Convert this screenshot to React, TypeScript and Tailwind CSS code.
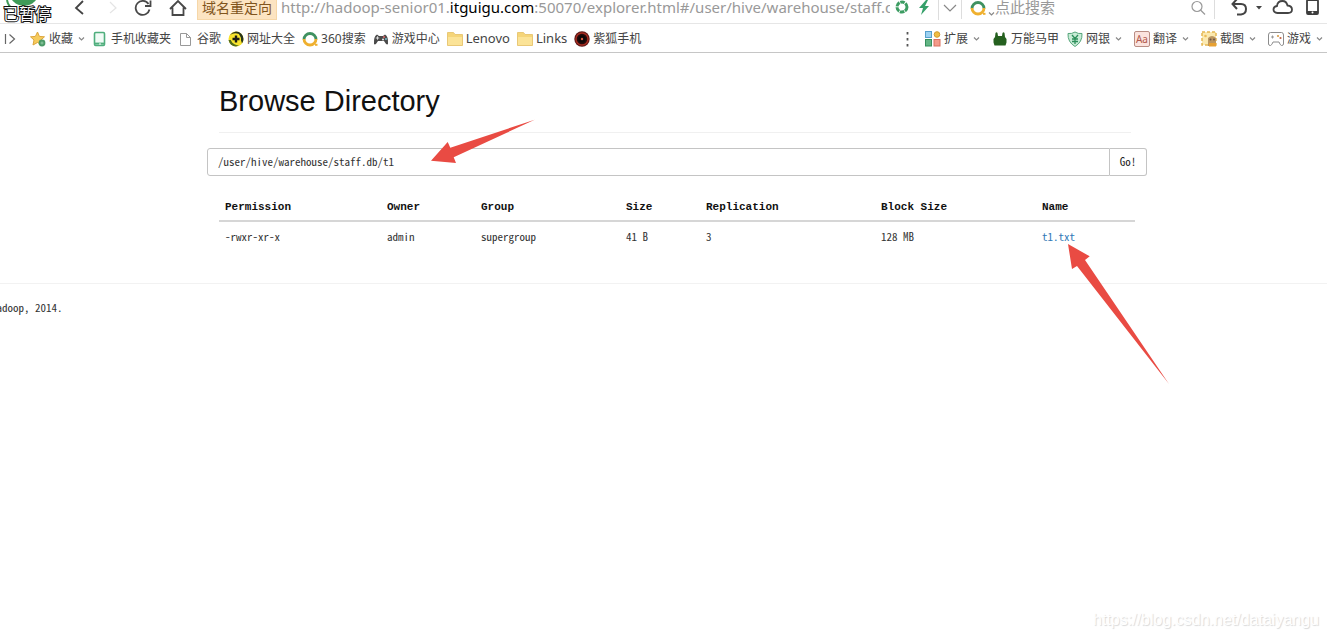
import type { ReactNode } from "react";

const mono = "font-['Noto_Sans_Mono_CJK_SC','Liberation_Mono',monospace]";

function Svg({ w = 16, h = 16, vb, children }: { w?: number; h?: number; vb?: string; children: ReactNode }) {
  return (
    <svg width={w} height={h} viewBox={vb ?? `0 0 ${w} ${h}`} fill="none" className="shrink-0" aria-hidden="true">
      {children}
    </svg>
  );
}

const Chevron = () => (
  <Svg w={7} h={6}><path d="M1 1.5 3.5 4 6 1.5" stroke="#888" strokeWidth="1.2" /></Svg>
);
const Star = () => (
  <Svg>
    <path d="M7.5 1 9.4 5.4 14.5 5.8 10.8 9 12 14 7.5 11.5 3 14 4 9 .5 5.8 5.4 5.4Z" fill="#f6cb5c" stroke="#dda63c" />
    <circle cx="12" cy="12" r="3.4" fill="#4c9a68" /><path d="M10.5 12h3M12 10.5v3" stroke="#8fc9a2" />
  </Svg>
);
const MobileMark = () => (
  <Svg><rect x="2.5" y="1.5" width="10" height="13" rx="1.2" stroke="#4fae7d" strokeWidth="1.6" fill="#f1fbf6" /><path d="M3 12.6h9" stroke="#4fae7d" strokeWidth="2" /><path d="M7 13h2" stroke="#fff" /></Svg>
);
const FileMark = () => (
  <Svg><path d="M2.5 2.5h6l4 4v8h-10Z" stroke="#999" /><path d="M8.5 2.5v4h4" stroke="#999" /></Svg>
);
const Hao = () => (
  <Svg><circle cx="8" cy="8" r="7.5" fill="#f7e12c" /><path d="M8 .5A7.5 7.5 0 0 1 15.5 8 7.5 7.5 0 0 1 14 12.500L11 3Q6 1 2 4 4 1 8 .5Z" fill="#26331c" /><path d="M.5 9Q2 15 8 15.500L11 14.500Q5 14 3 9Z" fill="#4f6a1c" /><circle cx="8" cy="8" r="5" fill="#fae72f" /><path d="M8 4.500v7M4.500 8h7" stroke="#1b1b14" strokeWidth="2.4" /></Svg>
);
const Ring = () => (
  <Svg><path d="M2 8.500A6 6 0 1 1 14 8.500" stroke="#3f9160" strokeWidth="2.800" /><path d="M2 8A6 6 0 0 0 14 8" stroke="#efb02f" strokeWidth="2.800" /><path d="M13 13.800h2.500" stroke="#efb02f" strokeWidth="2" /></Svg>
);
const Gamepad = () => (
  <Svg><path d="M1 13Q.5 5 4 3.500L6 5h4l2-1.500Q15.500 5 15 13 13.500 14.500 11 10H5Q2.500 14.500 1 13Z" fill="#4a4a4a" /><path d="M2.800 7h3.400M4.500 5.300v3.400" stroke="#ddd" /><circle cx="11" cy="6" r="1" fill="#d66" /><circle cx="13" cy="8" r="1" fill="#7bc" /><circle cx="10" cy="8.500" r="1" fill="#eee" /></Svg>
);
const Folder = () => (
  <Svg><path d="M.5 1.500h6l1.500 2h7.500v11H.5Z" fill="#f5d579" stroke="#e9c876" /><path d="M1 6h14v8H1Z" fill="#fbe397" /></Svg>
);
const Fox = () => (
  <Svg><circle cx="8" cy="8" r="7.700" fill="#5a1715" /><circle cx="8" cy="8" r="6" stroke="#a52c20" strokeWidth="1.500" fill="#230b0b" /><circle cx="8" cy="8" r="3.500" fill="#0d0707" /><circle cx="8" cy="8" r="1.200" fill="#d95b43" /></Svg>
);
const Grid = () => (
  <Svg><rect x=".5" y=".5" width="6" height="6" fill="#9cd1f1" stroke="#569fcd" /><circle cx="12" cy="3.500" r="2.800" fill="#f0bd43" stroke="#cf9a2f" /><rect x=".5" y="8.500" width="6" height="6.500" fill="#62b584" stroke="#358e5c" /><rect x="9" y="8.500" width="6" height="6.500" fill="#f39b8b" stroke="#d9705f" /></Svg>
);
const Vest = () => (
  <Svg><path d="M3.500 2Q4.500 .5 5.500 2L6 5h4l.5-3Q11.500 .5 12.500 2L13 6l1.500 2v3.500L13.500 14.500h-11L1.500 11.500V8L3 6Z" fill="#25601f" /></Svg>
);
const Shield = () => (
  <Svg><path d="M8 1Q11 3 15 2.500 15.500 11 8 15.500 .5 11 1 2.500 5 3 8 1Z" fill="#c9ecd7" stroke="#56a67b" /><path d="M5 4 8 7.500 11 4M8 7.500V13M5 8h6M5 10.500h6" stroke="#2d8f5b" strokeWidth="1.300" /></Svg>
);
const Translate = () => (
  <span aria-hidden="true" className="flex size-4 shrink-0 items-center justify-center rounded-xs border border-[#b98d84] bg-[#fbe3de] text-[10px] leading-none text-[#b1584b]">Aa</span>
);
const Capture = () => (
  <Svg><rect x="1" y="1" width="14" height="13" fill="#fbe9b0" stroke="#e5b751" strokeWidth="1.500" strokeDasharray="3 2" /><path d="M7 7Q11 3 15 7v8H7Z" fill="#bb9660" /><path d="M8 12h7v3.500H8Z" fill="#e8a132" /><circle cx="9.500" cy="8.500" r="1" fill="#6b5548" /><circle cx="13" cy="8.500" r="1" fill="#6b5548" /><circle cx="4.500" cy="5" r="1.300" fill="#edbc57" /></Svg>
);
const PadOutline = () => (
  <Svg><path d="M2.500 1.500h11Q15.500 1.500 15.500 4v9Q15.500 14.500 13.500 14.500 12 14 11 11H5Q4 14 2.500 14.500 .5 14.500 .5 13V4Q.5 1.500 2.500 1.500Z" stroke="#8c8c8c" /><path d="M3 6h3M4.500 4.500v3" stroke="#999" /><circle cx="10" cy="5" r="1.100" fill="#d99c45" /><circle cx="12.500" cy="7" r="1.100" fill="#c46444" /></Svg>
);

function Mark({ icon, label, menu }: { icon: ReactNode; label: string; menu?: boolean }) {
  return (
    <button type="button" className="flex shrink-0 items-center gap-[3px] whitespace-nowrap">
      {icon}
      <span>{label}</span>
      {menu && <span className="ml-0.5 flex"><Chevron /></span>}
    </button>
  );
}

function Toolbar() {
  return (
    <div className="flex h-6 items-center overflow-hidden border-b border-[#e6e6e6] pb-2 pl-[73px] pr-2">
      <div className="flex shrink-0 items-center">
        <button type="button" aria-label="Back"><Svg w={12} h={16}><path d="M10 1 3 8l7 6" stroke="#444" strokeWidth="1.800" /></Svg></button>
        <button type="button" aria-label="Forward" className="ml-6"><Svg w={8} h={16}><path d="M1 2l6 6-6 5" stroke="#e4e4e4" strokeWidth="1.200" /></Svg></button>
        <button type="button" aria-label="Reload" className="ml-4"><Svg w={20} h={18}><path d="M16.500 10.500A7 7 0 1 1 15.500 5" stroke="#484848" strokeWidth="1.800" /><path d="M17.500 1.500V7H12" stroke="#484848" strokeWidth="1.800" /></Svg></button>
        <button type="button" aria-label="Home" className="ml-4"><Svg w={18} h={18}><path d="M1 10 9 2l8 8M3.500 8.500V16h11V8.500" stroke="#484848" strokeWidth="1.800" /></Svg></button>
      </div>
      <div className="ml-2.5 flex min-w-0 flex-1 items-center">
        <span className="flex h-6 shrink-0 items-center border border-[#f6d7a8] bg-[#fce4c2] px-1 text-sm text-[#80541c]">域名重定向</span>
        <span className="ml-1 min-w-0 flex-1 overflow-hidden whitespace-nowrap text-[15px] text-[#999]">http://hadoop-senior01.<span className="text-black">itguigu.com</span>:50070/explorer.html#/user/hive/warehouse/staff.db</span>
        <div className="ml-1 flex shrink-0 items-center">
          <Svg><circle cx="8" cy="7" r="5" stroke="#3c9c62" strokeWidth="3" strokeDasharray="4.500 .8" /></Svg>
          <span className="ml-2 flex"><Svg w={12} h={16}><path d="M8 0 1 8h4L3 15l8-9H7l3-6Z" fill="#36a06a" /></Svg></span>
          <span className="ml-2 h-6 w-px bg-[#ddd]" />
          <button type="button" aria-label="Address history" className="mx-1"><Svg w={14} h={10}><path d="m1 2 6 6 6-6" stroke="#888" strokeWidth="1.200" /></Svg></button>
        </div>
      </div>
      <form className="flex w-[254px] shrink-0 items-center border-x border-[#ddd] pl-2 pr-2" onSubmit={(e) => e.preventDefault()}>
        <Ring />
        <span className="ml-0.5 mt-3 flex"><Chevron /></span>
        <input aria-label="搜索" placeholder="点此搜索" className="w-0 min-w-0 flex-1 text-[15px] outline-none placeholder:text-[#999]" />
        <button type="submit" aria-label="Search"><Svg><circle cx="7" cy="6.500" r="5" stroke="#999" strokeWidth="1.200" /><path d="m10.500 10 4.500 4.500" stroke="#999" strokeWidth="1.200" /></Svg></button>
      </form>
      <div className="ml-4 flex shrink-0 items-center">
        <button type="button" aria-label="Undo"><Svg w={17} h={18}><path d="M2 5h8q5 0 5 5t-5 5.500H6" stroke="#444" strokeWidth="2" /><path d="M6 0 1.500 5 6 10" stroke="#444" strokeWidth="2" /></Svg></button>
        <button type="button" aria-label="Undo history" className="ml-2"><Svg w={6} h={4}><path d="M0 0h6L3 3.500Z" fill="#444" /></Svg></button>
        <button type="button" aria-label="Cloud" className="ml-2.5"><Svg w={22} h={16}><path d="M5.500 13Q1.500 12.500 1.500 9.500T5 6Q5.500 1 10.500 1q4 0 5 4.500 4.500.5 4.500 4Q20 13 16 13Z" stroke="#444" strokeWidth="1.800" /></Svg></button>
        <button type="button" aria-label="Phone" className="ml-3"><Svg w={13} h={18}><rect x="1" y="1" width="11" height="14" rx="1" stroke="#3d3d3d" strokeWidth="1.800" /><path d="M1 13.500h11" stroke="#3d3d3d" strokeWidth="3" /><circle cx="6.500" cy="13.500" r="1" fill="#fff" /></Svg></button>
      </div>
    </div>
  );
}

function Bookmarks() {
  return (
    <div className="flex h-[29px] items-center border-b border-[#c6c6c6] pl-1 pt-0.5 text-xs text-[#444]">
      <button type="button" aria-label="Show sidebar"><Svg w={12} h={12}><path d="M1.500 1v10M5.500 1.500l5 4.500-5 4.500" stroke="#666" strokeWidth="1.200" /></Svg></button>
      <nav className="ml-3.5 flex items-center gap-[7px]">
        <Mark icon={<Star />} label="收藏" menu />
        <Mark icon={<MobileMark />} label="手机收藏夹" />
        <Mark icon={<FileMark />} label="谷歌" />
        <Mark icon={<Hao />} label="网址大全" />
        <Mark icon={<Ring />} label="360搜索" />
        <Mark icon={<Gamepad />} label="游戏中心" />
        <span className="flex items-center gap-[7px] text-[13px]">
          <Mark icon={<Folder />} label="Lenovo" />
          <Mark icon={<Folder />} label="Links" />
        </span>
        <Mark icon={<Fox />} label="紫狐手机" />
      </nav>
      <div className="ml-auto flex items-center gap-3 pr-1">
        <button type="button" aria-label="More" className="mr-1"><Svg w={3} h={16}><path d="M1.500 1v2.500M1.500 7v2.500M1.500 13v2.500" stroke="#555" strokeWidth="1.800" /></Svg></button>
        <Mark icon={<Grid />} label="扩展" menu />
        <span className="flex items-center gap-2">
          <Mark icon={<Vest />} label="万能马甲" />
          <Mark icon={<Shield />} label="网银" menu />
        </span>
        <Mark icon={<Translate />} label="翻译" menu />
        <Mark icon={<Capture />} label="截图" menu />
        <Mark icon={<PadOutline />} label="游戏" menu />
      </div>
    </div>
  );
}

const columns = [
  { name: "Permission", width: "w-[162px]", value: "-rwxr-xr-x" },
  { name: "Owner", width: "w-[94px]", value: "admin" },
  { name: "Group", width: "w-[145px]", value: "supergroup" },
  { name: "Size", width: "w-[80px]", value: "41 B" },
  { name: "Replication", width: "w-[175px]", value: "3" },
  { name: "Block Size", width: "w-[161px]", value: "128 MB" },
  { name: "Name", width: "w-[99px]", value: "t1.txt" },
];

export default function App() {
  return (
    <div className="relative min-h-screen overflow-hidden bg-white font-['Noto_Sans','Noto_Sans_CJK_SC',sans-serif]">
      <header>
        <Toolbar />
        <Bookmarks />
      </header>
      <div className="absolute left-0 top-0">
        <svg width="54" height="26" viewBox="0 0 54 26" fill="none" aria-hidden="true">
          <circle cx="24" cy="-9" r="15" fill="#3f9b58" />
          <path d="M7 0Q8 6 13 9" stroke="#3f9b58" strokeWidth="2" />
        </svg>
        <span className="absolute left-[3px] top-1 whitespace-nowrap text-base leading-5 text-white [-webkit-text-stroke:2px_#111] [paint-order:stroke_fill]">已暂停</span>
      </div>

      <main className={`ml-[207px] mr-[180px] text-[11px] text-[#333] ${mono}`}>
        <div className="ml-3 mr-4 border-b border-[#f0f0f0] pb-[15px] pt-8">
          <h1 className="font-['Liberation_Sans',sans-serif] text-[29px] leading-8 text-[#111]">Browse Directory</h1>
        </div>
        <form className="mt-[15px] flex h-7" onSubmit={(e) => e.preventDefault()}>
          <input aria-label="Directory" defaultValue="/user/hive/warehouse/staff.db/t1" className="min-w-0 flex-1 rounded-l-[3px] border border-[#c4c4c4] px-2.5 pb-0.5 outline-none" />
          <button type="submit" className="w-[37px] rounded-r-[3px] border border-l-0 border-[#c4c4c4] pb-0.5 text-[#222]">Go!</button>
        </form>
        <div className="ml-3 mr-3 mt-4">
          <table className="w-full table-fixed text-left">
            <colgroup>{columns.map((c) => <col key={c.name} className={c.width} />)}</colgroup>
            <thead>
              <tr className="h-[29px] border-b-2 border-[#d6d6d6] font-['Liberation_Mono',monospace] text-[#111]">
                {columns.map((c) => <th key={c.name} scope="col" className="px-1.5 pt-0.5 font-bold">{c.name}</th>)}
              </tr>
            </thead>
            <tbody>
              <tr className="h-[30px]">
                {columns.map((c) => (
                  <td key={c.name} className="px-1.5">
                    {c.name === "Name" ? <a href="#t1" className="text-[#337ab7]">{c.value}</a> : c.value}
                  </td>
                ))}
              </tr>
            </tbody>
          </table>
        </div>
      </main>

      <footer className={`mt-8 border-t border-[#f2f2f2] pt-[15px] text-[11px] leading-4 text-[#333] ${mono}`}>
        <p className="-ml-[9px]">Hadoop, 2014.</p>
      </footer>

      <svg className="pointer-events-none absolute left-0 top-0" width="1180" height="390" viewBox="0 0 1180 390" fill="#e94b43" aria-hidden="true">
        <path d="M431 160.700 447.700 142 450.300 147.700 534.700 119.700 453.700 157.300 456 163Z" />
        <path d="M1068 244 1089.700 256.300 1085 260 1169 384 1077 266 1072 269Z" />
      </svg>
      <div className="absolute bottom-2 right-2 font-['Liberation_Sans',sans-serif] text-base leading-5 text-white [text-shadow:1px_1px_1px_#d8d8d8]">https://blog.csdn.net/dataiyangu</div>
    </div>
  );
}
